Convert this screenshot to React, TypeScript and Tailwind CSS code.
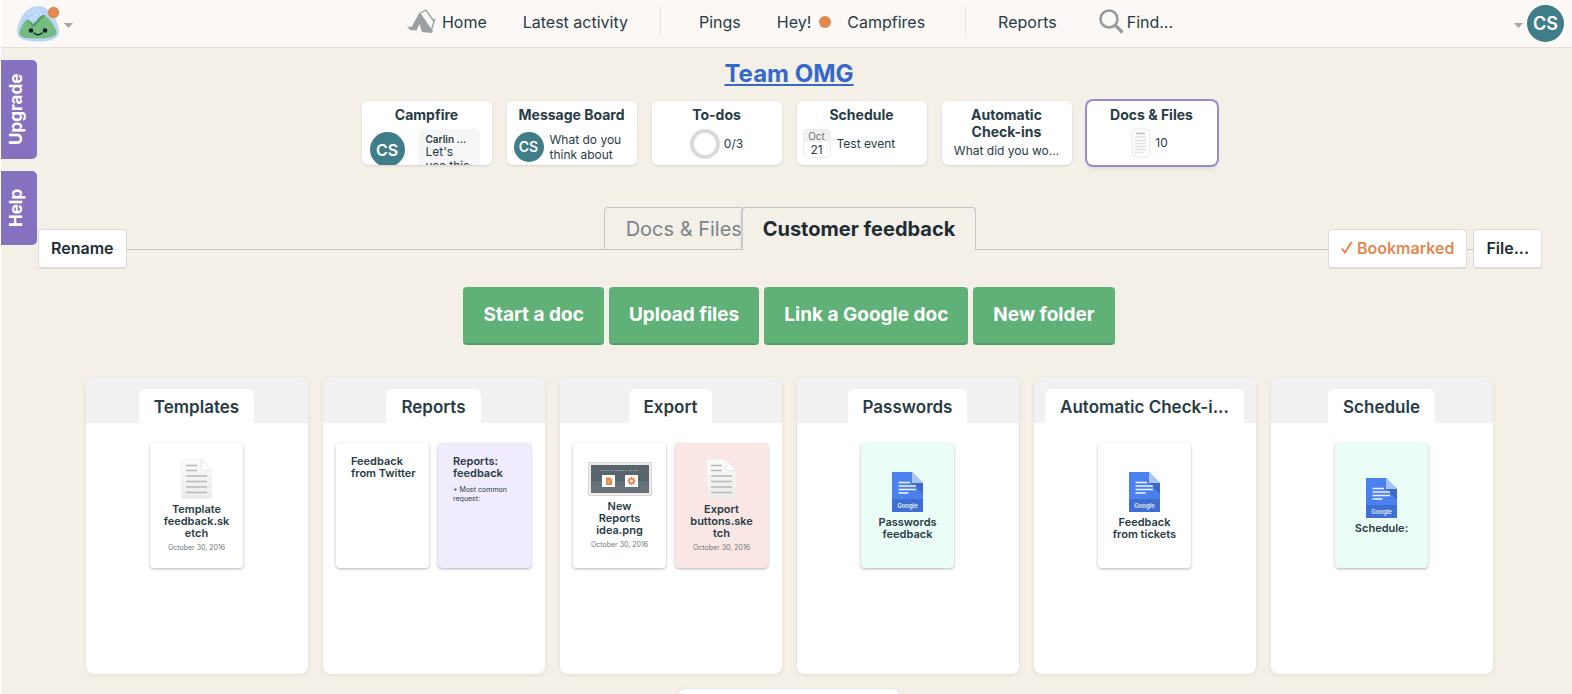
import * as React from "react"
import { clsx } from "clsx"

type Tint = "white" | "purple" | "pink" | "green"

type Item = {
  kind: "note" | "file" | "image" | "google"
  lines: string[]
  tint: Tint
  date?: string
  excerpt?: string
}

type FolderData = { name: string; items: Item[] }

const TINTS: Record<Tint, string> = {
  white: "bg-white",
  purple: "bg-[#f0ebfd]",
  pink: "bg-[#fae6e5]",
  green: "bg-[#eafdf6]",
}

const FOLDERS: FolderData[] = [
  {
    name: "Templates",
    items: [
      { kind: "file", tint: "white", lines: ["Template", "feedback.sk", "etch"], date: "October 30, 2016" },
    ],
  },
  {
    name: "Reports",
    items: [
      { kind: "note", tint: "white", lines: ["Feedback", "from Twitter"] },
      { kind: "note", tint: "purple", lines: ["Reports:", "feedback"], excerpt: "+ Most common request:" },
    ],
  },
  {
    name: "Export",
    items: [
      { kind: "image", tint: "white", lines: ["New", "Reports", "idea.png"], date: "October 30, 2016" },
      { kind: "file", tint: "pink", lines: ["Export", "buttons.ske", "tch"], date: "October 30, 2016" },
    ],
  },
  {
    name: "Passwords",
    items: [{ kind: "google", tint: "green", lines: ["Passwords", "feedback"] }],
  },
  {
    name: "Automatic Check-i...",
    items: [{ kind: "google", tint: "white", lines: ["Feedback", "from tickets"] }],
  },
  {
    name: "Schedule",
    items: [{ kind: "google", tint: "green", lines: ["Schedule:"] }],
  },
]

const ACTIONS = ["Start a doc", "Upload files", "Link a Google doc", "New folder"]

const PANEL = "h-[296px] w-[222px] overflow-hidden rounded-lg bg-white shadow-[0_1px_4px_#e3dccf]"

export default function App() {
  return (
    <div className="relative h-screen overflow-hidden border-l border-white bg-[#f4efe7] font-['Inter',sans-serif] text-[#283c46]">
      <TopBar />
      <SideTabs />
      <main className="pl-[5px]">
        <h1 className="pt-[10px] text-center text-2xl leading-8 font-bold">
          <a href="#team" className="text-[#3468cb] underline decoration-2 underline-offset-2">
            Team OMG
          </a>
        </h1>
        <ToolCards />
        <FolderTabs />
        <div className="mt-[18px] flex justify-center gap-[5px]">
          {ACTIONS.map((label) => (
            <button
              key={label}
              type="button"
              className="h-[58px] rounded border-b-2 border-[#4f9d67] bg-[#60b178] px-5 text-[19px] font-bold text-white"
            >
              {label}
            </button>
          ))}
        </div>
        <div className="mt-[33px] flex flex-wrap justify-center gap-[15px] px-8">
          {FOLDERS.map((folder) => (
            <Folder key={folder.name} folder={folder} />
          ))}
          <section className={PANEL} />
        </div>
      </main>
    </div>
  )
}

function TopBar() {
  return (
    <header className="grid h-12 grid-cols-[1fr_auto_1fr] items-center border-b border-[#e4dfda] bg-[#fcf8f5] pr-2 pl-[15px]">
      <button type="button" aria-label="Switch account" className="flex items-center gap-1 justify-self-start">
        <Logo />
        <Caret />
      </button>
      <nav className="flex items-center pb-1 text-base">
        <a href="#home" className="flex items-center gap-[6px]">
          <Tent />
          Home
        </a>
        <a href="#activity" className="ml-9">
          Latest activity
        </a>
        <span className="mx-8 h-[30px] w-px bg-[#e6e3e1]" />
        <a href="#pings" className="ml-[6px]">
          Pings
        </a>
        <a href="#hey" className="ml-9 flex items-center gap-2">
          Hey!
          <span className="size-3 rounded-full bg-[#e28850]" />
        </a>
        <a href="#campfires" className="ml-4">
          Campfires
        </a>
        <span className="mr-8 ml-10 h-[30px] w-px bg-[#e6e3e1]" />
        <a href="#reports">Reports</a>
        <a href="#find" className="ml-[42px] flex items-center gap-[3px]">
          <svg width="25" height="25" viewBox="0 0 25 25" fill="none" stroke="#969c9f">
            <circle cx="10" cy="10" r="8.500" strokeWidth="2.600" />
            <path d="M15.500 15.500 23.500 23.500" strokeWidth="3.200" />
          </svg>
          Find...
        </a>
      </nav>
      <button type="button" aria-label="Your profile" className="flex items-center gap-1 justify-self-end">
        <Caret />
        <Avatar className="size-[37px] text-lg" />
      </button>
    </header>
  )
}

function SideTabs() {
  const tab =
    "flex w-9 rotate-180 items-center justify-center rounded-l-[5px] bg-[#8571c0] pl-1 text-[17px] font-bold text-white [writing-mode:vertical-rl]"
  return (
    <aside className="absolute top-[60px] left-0 flex flex-col gap-3">
      <button type="button" className={clsx(tab, "h-[99px]")}>
        Upgrade
      </button>
      <button type="button" className={clsx(tab, "h-[74px]")}>
        Help
      </button>
    </aside>
  )
}

function Avatar({ className }: { className: string }) {
  return (
    <span
      className={clsx(
        "flex shrink-0 items-center justify-center rounded-full bg-[#3f7e89] font-semibold text-white",
        className
      )}
    >
      CS
    </span>
  )
}

function ToolCard({
  title,
  active,
  children,
}: {
  title: React.ReactNode
  active?: boolean
  children: React.ReactNode
}) {
  return (
    <a
      href="#tool"
      className={clsx(
        "block h-16 w-[130px] overflow-hidden rounded-md bg-white pt-[5px] text-xs",
        active ? "shadow-md ring-2 ring-[#9a8bcc]" : "shadow-sm"
      )}
    >
      <h2 className="text-center text-sm leading-[17px] font-bold">{title}</h2>
      {children}
    </a>
  )
}

function ToolCards() {
  return (
    <section className="mt-[11px] flex justify-center gap-[15px]">
      <ToolCard title="Campfire">
        <div className="mt-[6px] flex items-start justify-between pr-3 pl-2">
          <Avatar className="mt-[3px] size-[35px] text-base" />
          <div className="w-[62px] rounded-md bg-[#f6f6f6] px-2 pt-1 whitespace-nowrap">
            <div className="text-[10px] leading-3 font-semibold">Carlin ...</div>
            <div className="text-xs leading-[14px]">
              Let's
              <br />
              use this
            </div>
          </div>
        </div>
      </ToolCard>
      <ToolCard title="Message Board">
        <div className="mt-[9px] flex gap-[6px] pl-[7px]">
          <Avatar className="size-[30px] text-sm" />
          <p className="leading-[15px]">
            What do you
            <br />
            think about
          </p>
        </div>
      </ToolCard>
      <ToolCard title="To-dos">
        <div className="mt-[6px] flex items-center justify-center gap-1">
          <span className="size-[30px] rounded-full border-4 border-[#dadad9]" />
          0/3
        </div>
      </ToolCard>
      <ToolCard title="Schedule">
        <div className="mt-[6px] flex items-center gap-[6px] pl-[6px]">
          <div className="w-7 overflow-hidden rounded border border-[#ececec] text-center">
            <div className="bg-[#f0f0f0] text-[10px] leading-3 text-[#6d777d]">Oct</div>
            <div className="leading-[15px]">21</div>
          </div>
          Test event
        </div>
      </ToolCard>
      <ToolCard
        title={
          <>
            Automatic
            <br />
            Check-ins
          </>
        }
      >
        <p className="mt-[3px] text-center leading-[15px]">What did you wo...</p>
      </ToolCard>
      <ToolCard title="Docs & Files" active>
        <div className="mt-[5px] flex items-center justify-center gap-1 pr-1">
          <svg width="20" height="30" viewBox="0 0 20 30" fill="none">
            <rect x="1" y="1" width="18" height="28" rx="4" fill="#fdfdfd" stroke="#e6e6e6" />
            <path d="M5 5.500H14" stroke="#bdbdbd" strokeWidth="1.500" />
            <path d="M4 9H15M4 12.500H15M4 15.500H15M4 18.500H15M4 21.500H15M4 24.500H12" stroke="#e2e2e2" strokeWidth="1.500" />
          </svg>
          10
        </div>
      </ToolCard>
    </section>
  )
}

function FolderTabs() {
  const button =
    "h-10 rounded border border-b-2 border-[#dcdcda] bg-white px-3 pb-[2px] text-base font-semibold"
  return (
    <section className="mt-[42px] grid grid-cols-[1fr_auto_1fr] pr-[30px] pl-8">
      <div className="flex items-center self-end">
        <button type="button" className={clsx(button, "text-[#1d2d35]")}>
          Rename
        </button>
        <span className="h-px flex-1 bg-[#c3c6c9]" />
      </div>
      <div className="flex h-[62px] items-start text-xl">
        <a
          href="#docs"
          className="flex h-[43px] w-[138px] items-center overflow-hidden rounded-tl border border-r-0 border-[#c3c6c9] pl-[21px] whitespace-nowrap text-[#7b858b]"
        >
          Docs &amp; Files
        </a>
        <a
          href="#feedback"
          className="flex h-[43px] items-center rounded-t border border-b-0 border-[#c3c6c9] bg-[#f4efe7] px-5 font-bold text-[#1d2d35] shadow-[-2px_0_2px_-1px_#c3c6c9]"
        >
          Customer feedback
        </a>
      </div>
      <div className="flex items-center self-end">
        <span className="h-px flex-1 bg-[#c3c6c9]" />
        <button type="button" className={clsx(button, "flex items-center gap-1 text-[#e28850]")}>
          <svg width="12" height="13" viewBox="0 0 12 13" fill="none" stroke="#e28850" strokeWidth="2">
            <path d="M1 7.500 4 11.500 10.500 1" />
          </svg>
          Bookmarked
        </button>
        <span className="h-px w-[6px] bg-[#c3c6c9]" />
        <button type="button" className={clsx(button, "text-[#1d2d35]")}>
          File...
        </button>
      </div>
    </section>
  )
}

function Folder({ folder }: { folder: FolderData }) {
  return (
    <section className={PANEL}>
      <div className="flex h-[45px] items-end justify-center bg-[#f1f1f1] px-[11px]">
        <h2 className="h-[34px] rounded-t-md bg-white px-[15px] text-[17px] leading-9 font-semibold whitespace-nowrap">
          {folder.name}
        </h2>
      </div>
      <div className="flex justify-center gap-[9px] pt-5">
        {folder.items.map((item) => (
          <ItemCard key={item.lines.join("")} item={item} />
        ))}
      </div>
    </section>
  )
}

function ItemCard({ item }: { item: Item }) {
  const title = item.lines.map((line) => (
    <span key={line} className="block whitespace-nowrap">
      {line}
    </span>
  ))
  const base = "flex h-[125px] w-[93px] flex-col rounded shadow-[0_1px_3px_#b5b5b5]"

  if (item.kind === "note") {
    return (
      <a href="#item" className={clsx(base, "px-[15px] pt-3", TINTS[item.tint])}>
        <h3 className="text-[11px] leading-3 font-semibold">{title}</h3>
        {item.excerpt ? <p className="mt-[6px] text-[7px] leading-[9px]">{item.excerpt}</p> : null}
      </a>
    )
  }

  return (
    <a href="#item" className={clsx(base, "items-center justify-center text-center", TINTS[item.tint])}>
      {item.kind === "file" ? <FileIcon /> : null}
      {item.kind === "image" ? <Thumbnail /> : null}
      {item.kind === "google" ? <GoogleDocIcon /> : null}
      <h3 className="mt-1 text-[11px] leading-3 font-semibold">{title}</h3>
      {item.date ? <p className="mt-1 text-[7px] leading-[9px] text-[#6d777d]">{item.date}</p> : null}
    </a>
  )
}

function Caret() {
  return (
    <svg width="9" height="5" viewBox="0 0 9 5" className="mt-1">
      <path d="M0 0H9L4.500 5Z" fill="#a3a6a8" />
    </svg>
  )
}

function Logo() {
  return (
    <svg width="44" height="38" viewBox="0 0 44 38">
      <path
        d="M22 1C33 1 42 15 43 26 43.500 34 34 36.500 22 36.500S.5 34 1 26C2 14 11 1 22 1Z"
        fill="#b9d5f8"
      />
      <g fill="#fff">
        <circle cx="13" cy="9" r="0.700" />
        <circle cx="18" cy="6" r="0.700" />
        <circle cx="23" cy="6" r="0.700" />
        <circle cx="15.500" cy="13" r="0.700" />
        <circle cx="20" cy="10" r="0.700" />
        <circle cx="25" cy="10" r="0.700" />
        <circle cx="20" cy="15" r="0.700" />
      </g>
      <path
        d="M3.500 28C4.500 22 7.500 17 10.500 15 12.500 14 14.500 17 17 19 21 16 24 10.500 27 10 31 10 38.500 20 40.500 27 41 32 32 33.500 22 33.500S3 33 3.500 28Z"
        fill="#76bb7f"
      />
      <path
        d="M10.500 15C12.500 14 14.500 17 17 19 21 16 24 10.500 27 10 28 10 29 10.500 29.500 11 25.500 13 22 19 17 22.500 14.500 20.500 13 16.500 10.500 15Z"
        fill="#55a268"
      />
      <circle cx="15" cy="25.500" r="2.300" fill="#15222b" />
      <circle cx="29" cy="25.500" r="2.300" fill="#15222b" />
      <path d="M18 28Q22 31.500 26 28" fill="none" stroke="#15222b" strokeWidth="1.500" strokeLinecap="round" />
      <circle cx="37.500" cy="7.500" r="5.700" fill="#e28850" />
    </svg>
  )
}

function Tent() {
  return (
    <svg width="29" height="25" viewBox="0 0 29 25">
      <path
        d="M0 17.500 4.500 18 12 4.500 13.500 4 26 22.500 24 24 15 23 12.500 15 9.500 21.500 3 21Z"
        fill="#9aa0a2"
      />
      <path
        d="M12.500 4.500 19 1.200 27 12.500 24 22.500"
        fill="none"
        stroke="#9aa0a2"
        strokeWidth="1.400"
        strokeLinejoin="round"
      />
      <path d="M26 10 28.800 9.500 27 13Z" fill="#9aa0a2" />
    </svg>
  )
}

function FileIcon() {
  return (
    <svg width="31" height="40" viewBox="0 0 31 40">
      <defs>
        <linearGradient id="paper" x1="0" y1="0" x2="0" y2="1">
          <stop offset="0" stopColor="#fbfbfb" />
          <stop offset="1" stopColor="#ececea" />
        </linearGradient>
      </defs>
      <path d="M.5.5H20L30.500 11.500V39.500H.5Z" fill="url(#paper)" stroke="#e9e9e8" strokeWidth="0.500" />
      <path d="M20 .5 30.500 11.500H22Q20 11.500 20 9.500Z" fill="#fff" stroke="#dededd" strokeWidth="0.700" />
      <path d="M5 6.500H16M5 11.500H16M5 17H26M5 22.500H26M5 28H26M5 33.500H26" stroke="#b4bab6" strokeWidth="1.300" />
    </svg>
  )
}

function Thumbnail() {
  return (
    <svg width="64" height="34" viewBox="0 0 64 34">
      <rect x="0.500" y="0.500" width="63" height="33" fill="#ecebe9" stroke="#d9d9d6" />
      <rect x="3" y="3" width="58" height="28" fill="#667079" />
      <rect x="3" y="3" width="58" height="16" fill="#5a666e" />
      <path d="M13 8.500H51" stroke="#89939a" strokeWidth="1" strokeDasharray="3 1 5 1 2 2" />
      <rect x="14" y="13" width="13" height="12" rx="0.500" fill="#fff" />
      <path d="M18 15.500H22L24 17.500V23H18Z" fill="#e28850" />
      <path d="M19.500 18.500H22M19.500 20.500H22" stroke="#f6d3bb" strokeWidth="0.600" />
      <rect x="37" y="13" width="13" height="12" rx="0.500" fill="#fff" />
      <circle cx="43.500" cy="19" r="2.300" fill="none" stroke="#e28850" strokeWidth="1.800" />
      <path
        d="M43.500 15V16.500M43.500 21.500V23M39.500 19H41M46 19H47.500M40.700 16.200 41.700 17.200M45.300 20.800 46.300 21.800M40.700 21.800 41.700 20.800M45.300 17.200 46.300 16.200"
        stroke="#e28850"
        strokeWidth="1.300"
      />
    </svg>
  )
}

function GoogleDocIcon() {
  return (
    <svg width="31" height="40" viewBox="0 0 31 40">
      <path d="M0 0H20L31 11V40H0Z" fill="#4b80ef" />
      <path d="M20 0 31 11H20Z" fill="#a9c4f8" />
      <path d="M20 11H31V22Z" fill="#3b68c9" />
      <rect y="27" width="31" height="13" fill="#3f6fd3" />
      <path d="M6.500 10.500H18M6.500 14H24M6.500 17.500H24M6.500 21H16.500" stroke="#eef3fe" strokeWidth="1.500" />
      <text x="15.500" y="36" textAnchor="middle" fontSize="6" fontWeight="600" fill="#e5edfd">
        Google
      </text>
    </svg>
  )
}
